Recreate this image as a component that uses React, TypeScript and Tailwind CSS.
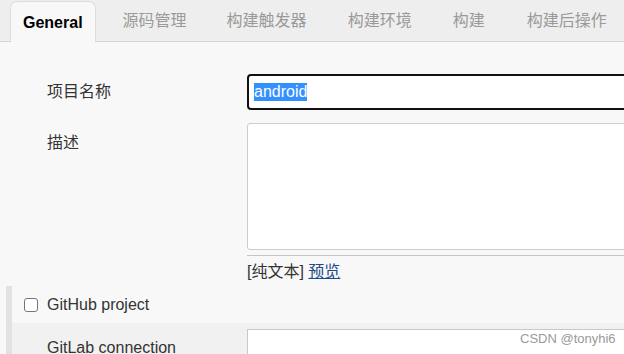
import React from "react";

const latin = { fontFamily: '"Liberation Sans", Arial, "Noto Sans CJK SC", sans-serif' };

export default function App() {
  return (
    <div className="relative w-[624px] h-[354px] overflow-hidden bg-[#f8f8f8] text-[16px] text-[#333]" style={latin}>
      {/* Tab bar */}
      <div className="flex h-[42px] items-end bg-[#eeeeee] border-b border-[#d4d4d4] pl-[10px]">
        <div className="h-[41px] -mb-px px-[12px] pt-[1px] flex items-center rounded-t-[7px] border border-b-0 border-[#dcdcdc] bg-[#f8f8f8] font-bold text-black">
          General
        </div>
        <div className="h-[41px] pt-[1px] flex items-center text-[#9a9a9a] ml-[27px]">源码管理</div>
        <div className="h-[41px] pt-[1px] flex items-center text-[#9a9a9a] ml-[40px]">构建触发器</div>
        <div className="h-[41px] pt-[1px] flex items-center text-[#9a9a9a] ml-[41px]">构建环境</div>
        <div className="h-[41px] pt-[1px] flex items-center text-[#9a9a9a] ml-[41px]">构建</div>
        <div className="h-[41px] pt-[1px] flex items-center text-[#9a9a9a] ml-[42px] whitespace-nowrap">构建后操作</div>
      </div>

      {/* Project name row */}
      <div className="flex items-center mt-[32px] pl-[47px]">
        <div className="w-[200px] shrink-0">项目名称</div>
        <div className="h-[36px] w-[400px] shrink-0 rounded-[4px] border-2 border-[#111] bg-white flex items-center pl-[5px]">
          <span className="bg-[#3390ff] text-white leading-[18px]">android</span>
        </div>
      </div>

      {/* Description row */}
      <div className="flex mt-[13px] pl-[47px]">
        <div className="w-[200px] shrink-0 pt-[8px]">描述</div>
        <div className="flex flex-col">
          <div className="h-[127px] w-[400px] rounded-[3px] border border-[#cccccc] bg-white" />
          <div className="h-[6px] w-[400px] border-t border-[#c4c4c4] mt-[5px]" />
          <div className="mt-[1px] leading-[20px]">
            [纯文本] <span className="text-[#204a87] underline">预览</span>
          </div>
        </div>
      </div>

      {/* Section */}
      <div className="mt-[4px] ml-[6px] border-l-[6px] border-[#e2e2e2]">
        <div className="flex items-center h-[37px] pl-[12px]">
          <div className="w-[14px] h-[14px] rounded-[3px] border-[1.5px] border-[#767676] bg-white" />
          <div className="ml-[9px]">GitHub project</div>
        </div>
        <div className="flex bg-[#f1f1f1] pl-[35px] pt-[6px] h-[40px]">
          <div className="w-[200px] shrink-0 pt-[7px] whitespace-nowrap">GitLab connection</div>
          <div className="h-[40px] w-[400px] shrink-0 border border-[#c8c8c8] bg-white" />
        </div>
      </div>

      {/* Watermark */}
      <div className="absolute left-[520px] top-[329px] text-[13px] text-[#9a9a9a] whitespace-nowrap">
        CSDN @tonyhi6
      </div>
    </div>
  );
}
